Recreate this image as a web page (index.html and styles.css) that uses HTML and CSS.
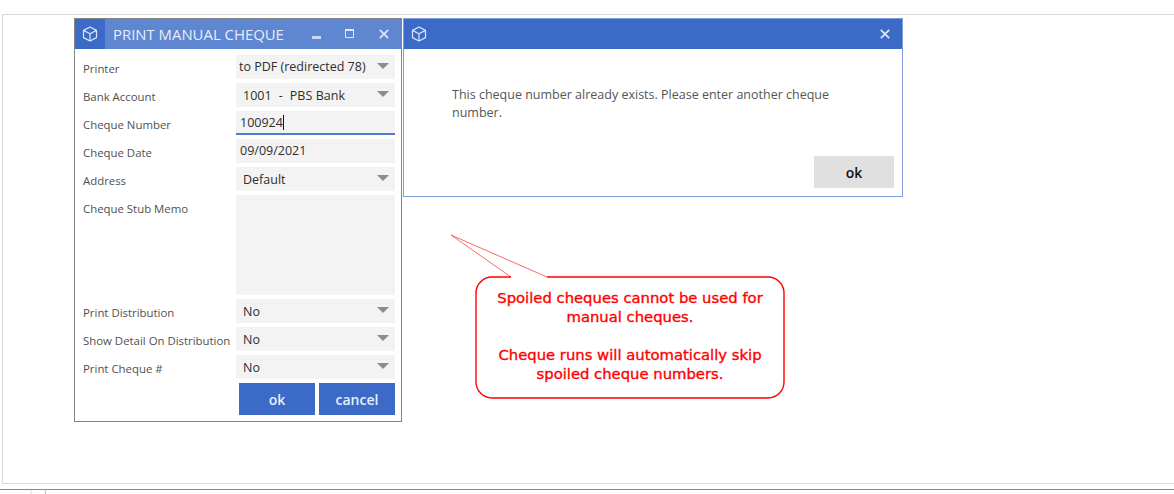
FILE: index.html
```html
<!DOCTYPE html>
<html lang="en">
<head>
<meta charset="utf-8">
<title>Print Manual Cheque</title>
<link rel="stylesheet" href="styles.css">
</head>
<body>
<svg width="0" height="0" class="defs" aria-hidden="true">
  <symbol id="cube" viewBox="0 0 16 16">
    <path d="M8 1 14.5 4.4V11.6L8 15 1.5 11.6V4.4Z M1.5 4.4 8 7.8 14.5 4.4 M8 7.8V15" fill="none" stroke="currentColor" stroke-width="1.2" stroke-linejoin="round"/>
  </symbol>
  <symbol id="close" viewBox="0 0 10 10">
    <path d="M.8.8 9.2 9.2M9.2.8.8 9.2" fill="none" stroke="currentColor" stroke-width="1.8"/>
  </symbol>
</svg>

<main class="frame"></main>
<footer class="statusbar"><span class="tab-a"></span><span class="tab-b"></span></footer>

<section class="window print-window">
  <header class="titlebar titlebar-soft">
    <span class="icon-box"><svg class="cube"><use href="#cube"/></svg></span>
    <h1 class="title">PRINT MANUAL CHEQUE</h1>
    <span class="ctrl ctrl-min"><i class="min-glyph"></i></span>
    <span class="ctrl ctrl-max"><i class="max-glyph"></i></span>
    <span class="ctrl ctrl-close"><svg class="x"><use href="#close"/></svg></span>
  </header>
  <form class="form">
    <label class="label">Printer</label>
    <div class="field select clipped"><span class="value">to PDF (redirected 78)</span><i class="caret"></i></div>
    <label class="label">Bank Account</label>
    <div class="field select"><span class="value value-wide">1001 &nbsp;-&nbsp; PBS Bank</span><i class="caret"></i></div>
    <label class="label">Cheque Number</label>
    <div class="field input active"><span class="value">100924</span><i class="cursor"></i></div>
    <label class="label">Cheque Date</label>
    <div class="field input"><span class="value">09/09/2021</span></div>
    <label class="label">Address</label>
    <div class="field select"><span class="value">Default</span><i class="caret"></i></div>
    <label class="label">Cheque Stub Memo</label>
    <div class="field memo"></div>
    <label class="label">Print Distribution</label>
    <div class="field select"><span class="value">No</span><i class="caret"></i></div>
    <label class="label">Show Detail On Distribution</label>
    <div class="field select"><span class="value">No</span><i class="caret"></i></div>
    <label class="label">Print Cheque #</label>
    <div class="field select"><span class="value">No</span><i class="caret"></i></div>
    <div class="actions">
      <button type="button" class="btn btn-primary">ok</button>
      <button type="button" class="btn btn-primary">cancel</button>
    </div>
  </form>
</section>

<section class="window alert-window">
  <header class="titlebar titlebar-strong">
    <span class="icon-box"><svg class="cube"><use href="#cube"/></svg></span>
    <span class="spacer"></span>
    <span class="ctrl ctrl-close-alert"><svg class="x x-small"><use href="#close"/></svg></span>
  </header>
  <div class="alert-body">
    <p class="alert-text">This cheque number already exists. Please enter another cheque number.</p>
    <div class="alert-actions"><button type="button" class="btn btn-grey">ok</button></div>
  </div>
</section>

<svg class="callout-shape" width="340" height="170" viewBox="0 0 340 170" aria-hidden="true">
  <path class="callout-tail" d="M61 43 1 1 97 43"/>
  <path class="callout-box" d="M61 43H42A16 16 0 0 0 26 59V148A16 16 0 0 0 42 164H318A16 16 0 0 0 334 148V59A16 16 0 0 0 318 43H97"/>
</svg>
<aside class="callout-text">
  <p>Spoiled cheques cannot be used for<br>manual cheques.</p>
  <p>Cheque runs will automatically skip<br>spoiled cheque numbers.</p>
</aside>
</body>
</html>
```

FILE: styles.css
```css
* { box-sizing: border-box; }
html, body { margin: 0; padding: 0; }
body {
  width: 1174px;
  height: 494px;
  overflow: hidden;
  background: #fff;
  font-family: "Open Sans", "Noto Sans", sans-serif;
  position: relative;
}
.defs { position: absolute; }

.frame {
  margin: 14px 0 0 2px;
  height: 470px;
  border-top: 1px solid #d9d9d9;
  border-left: 1px solid #d9d9d9;
  border-bottom: 1px solid #d9d9d9;
}
.statusbar {
  margin-top: 5px;
  height: 5px;
  border-top: 1px solid #8a8a8a;
  display: flex;
}
.tab-a { margin-left: 30px; width: 2px; background: #eee; }
.tab-b { margin-left: 13px; width: 1px; background: #bbb; }

.window { position: absolute; background: #fff; display: flex; flex-direction: column; }
.print-window { left: 74px; top: 18px; width: 328px; height: 404px; border: 1px solid #858585; }
.alert-window { left: 403px; top: 18px; width: 500px; height: 179px; border: 1px solid #7d9ddd; }

.titlebar { height: 30px; display: flex; align-items: center; color: #fff; flex: none; }
.titlebar-soft { background: #5f86d0; }
.titlebar-strong { background: #3b6bc6; }
.icon-box {
  width: 30px; height: 30px; display: flex; align-items: center; justify-content: center;
  background: #3b6bc6; color: #dbe5f7; flex: none;
}
.cube { width: 16px; height: 16px; }
.title {
  margin: 0 0 0 8px; font-size: 14.9px; font-weight: 400; line-height: 30px;
  color: #e6edfa; flex: 1; white-space: nowrap;
}
.spacer { flex: 1; }
.ctrl { display: flex; align-items: center; justify-content: center; color: #dbe5f7; flex: none; }
.ctrl-min { width: 9px; margin-right: 24px; }
.ctrl-max { width: 9px; margin-right: 25px; }
.ctrl-close { width: 10px; margin-right: 12px; }
.ctrl-close-alert { width: 10px; margin-right: 12px; }
.min-glyph { display: block; width: 9px; height: 3px; background: #c9d7f1; margin-top: 6px; }
.max-glyph { display: block; width: 9px; height: 9px; border: 1px solid #dbe5f7; border-top-width: 2px; margin-top: -2px; }
.x { width: 10px; height: 10px; display: block; }

.form {
  display: grid;
  grid-template-columns: 153px 159px;
  grid-template-rows: repeat(5, 24px) 100px repeat(3, 24px) 32px;
  row-gap: 4px;
  padding: 6px 6px 0 8px;
}
.label { font-size: 11.4px; line-height: 28px; color: #505050; white-space: nowrap; }
.field {
  background: #f3f3f3;
  font-size: 12.5px;
  line-height: 23px;
  color: #2e2e2e;
  display: flex;
  align-items: flex-start;
  position: relative;
  overflow: hidden;
}
.select { padding-top: 1px; }
.value { padding-left: 7px; white-space: nowrap; }
.value-wide { word-spacing: 0.3px; }
.clipped { padding-top: 0; }
.clipped .value { padding-left: 3px; }
.input .value { padding-left: 4px; }
.caret {
  position: absolute; right: 6px; top: 8px;
  width: 0; height: 0;
  border-left: 6px solid transparent;
  border-right: 6px solid transparent;
  border-top: 6px solid #8c8c8c;
}
.active { border-bottom: 2px solid #4f7cc9; }
.cursor { display: block; width: 1px; height: 15px; background: #111; margin: 4px 0 0 0; }
.memo { height: 100px; }
.actions { grid-column: 2; display: flex; justify-content: flex-end; gap: 4px; }
.btn {
  border: 0; padding: 0; margin: 0; font-family: inherit; font-size: 14px; font-weight: 600;
  height: 32px; cursor: default;
}
.btn-primary { width: 76px; background: #3b6bc6; color: #e8effb; }
.btn-grey { width: 80px; background: #e0e0e0; color: #111; }

.alert-body { flex: 1; display: flex; flex-direction: column; padding: 37px 8px 8px 48px; }
.alert-text { margin: 0; width: 395px; flex: 1; font-size: 12.5px; line-height: 18px; color: #555; }
.alert-actions { display: flex; justify-content: flex-end; }

.callout-shape { position: absolute; left: 450px; top: 234px; }
.callout-tail { fill: none; stroke: #f66; stroke-width: 1; }
.callout-box { fill: none; stroke: #f00; stroke-width: 1.4; }
.callout-text {
  position: absolute; left: 476px; top: 288px; width: 308px;
  text-align: center; color: #f00; -webkit-text-stroke: 0.35px #f00;
  font-family: "DejaVu Sans", sans-serif; font-size: 14.8px; line-height: 19px;
}
.callout-text p { margin: 0 0 19px; }
```
